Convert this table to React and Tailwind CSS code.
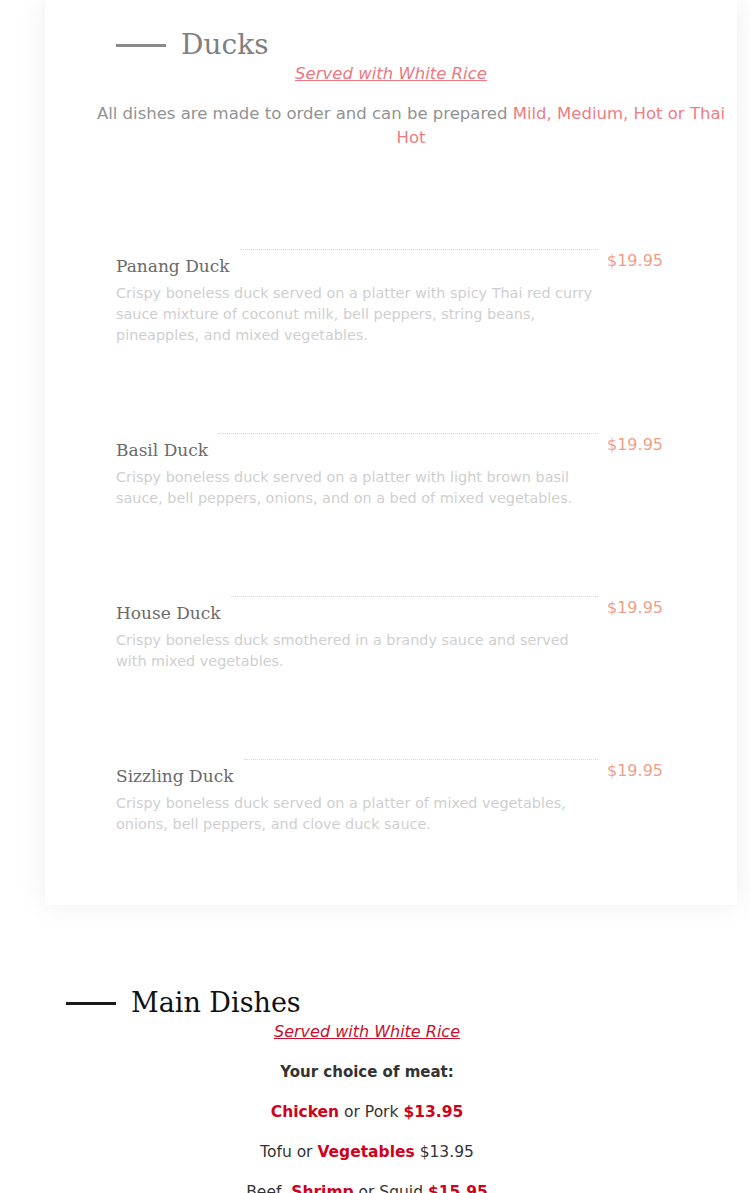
import React from "react";

// 오리 요리 목록
const ducks = [
  {
    name: "Panang Duck",
    price: "$19.95",
    desc: "Crispy boneless duck served on a platter with spicy Thai red curry sauce mixture of coconut milk, bell peppers, string beans, pineapples, and mixed vegetables.",
  },
  {
    name: "Basil Duck",
    price: "$19.95",
    desc: "Crispy boneless duck served on a platter with light brown basil sauce, bell peppers, onions, and on a bed of mixed vegetables.",
  },
  {
    name: "House Duck",
    price: "$19.95",
    desc: "Crispy boneless duck smothered in a brandy sauce and served with mixed vegetables.",
  },
  {
    name: "Sizzling Duck",
    price: "$19.95",
    desc: "Crispy boneless duck served on a platter of mixed vegetables, onions, bell peppers, and clove duck sauce.",
  },
];

const sans = "font-['DejaVu_Sans',sans-serif]";
const serif = "font-['DejaVu_Serif',serif]";

function MenuItem({ item }) {
  return (
    <div className="flex pl-[71px]">
      <div className="w-[484px]">
        <div className="flex">
          <h3 className={`${serif} mt-[5px] text-[17px] leading-[24px] text-[#6a6a6a] whitespace-nowrap`}>
            {item.name}
          </h3>
          <div className="flex-1 ml-[10px] mr-[2px] border-t border-dotted border-[#d6d6d6]"></div>
        </div>
        <p className={`${sans} mt-[5px] text-[14.4px] leading-[21px] text-[#cfcfcf]`}>
          {item.desc}
        </p>
      </div>
      <div className={`${sans} ml-[7px] text-[16px] leading-[24px] text-[#f0a088]`}>
        {item.price}
      </div>
    </div>
  );
}

export default function App() {
  return (
    <div className="bg-white min-h-[1193px] overflow-hidden">
      {/* 오리 카드 */}
      <div className="ml-[45px] w-[692px] bg-white pt-[28px] pb-[70px] shadow-[0_0_28px_rgba(0,0,0,0.07)]">
        <div className="flex items-center pl-[71px]">
          <div className="w-[50px] h-[3px] bg-[#8a8a8a]"></div>
          <h2 className={`${serif} ml-[15px] text-[28px] leading-[34px] text-[#808080]`}>Ducks</h2>
        </div>
        <p className={`${sans} text-center italic underline text-[16.5px] leading-[24px] text-[#ec7880]`}>
          Served with White Rice
        </p>
        <p className={`${sans} ml-[40px] mt-[16px] text-center text-[16.5px] leading-[24px] text-[#929292]`}>
          All dishes are made to order and can be prepared{" "}
          <span className="text-[#ee7c82]">Mild, Medium, Hot or Thai Hot</span>
        </p>

        <div className="mt-[99px] flex flex-col gap-[87px]">
          {ducks.map((item) => (
            <MenuItem key={item.name} item={item} />
          ))}
        </div>
      </div>

      {/* 메인 요리 */}
      <div className="mt-[81px] w-[734px]">
        <div className="flex items-center pl-[66px]">
          <div className="w-[50px] h-[3px] bg-[#1a1a1a]"></div>
          <h2 className={`${serif} ml-[15px] text-[27px] leading-[34px] text-[#111]`}>Main Dishes</h2>
        </div>
        <div className={`${sans} text-center text-[15.5px] leading-[24px] text-[#333]`}>
          <p className="italic underline text-[16px] text-[#c8102e]">Served with White Rice</p>
          <p className="mt-[16px] text-[15px] font-bold">Your choice of meat:</p>
          <p className="mt-[16px]">
            <span className="text-[#d0021b] font-bold">Chicken</span> or Pork{" "}
            <span className="text-[#d0021b] font-bold">$13.95</span>
          </p>
          <p className="mt-[16px]">
            Tofu or <span className="text-[#d0021b] font-bold">Vegetables</span> $13.95
          </p>
          <p className="mt-[16px]">
            Beef, <span className="text-[#d0021b] font-bold">Shrimp</span> or Squid{" "}
            <span className="text-[#d0021b] font-bold">$15.95</span>
          </p>
        </div>
      </div>
    </div>
  );
}
